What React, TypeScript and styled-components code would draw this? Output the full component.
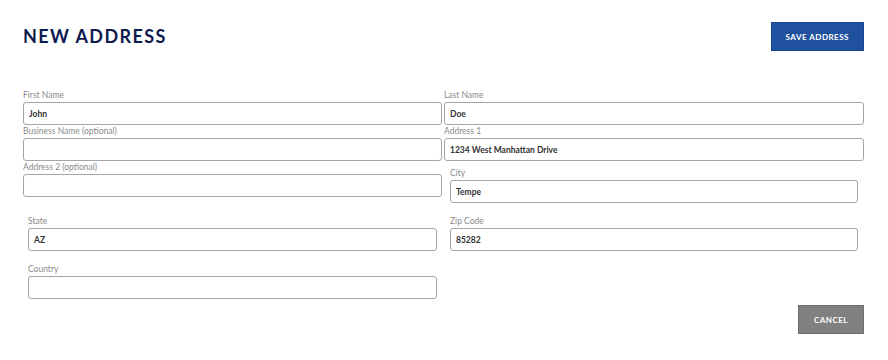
import styled, { createGlobalStyle } from 'styled-components'

const GlobalStyle = createGlobalStyle`
  html, body {
    margin: 0;
    padding: 0;
    background: #ffffff;
  }
  body {
    font-family: Lato, 'Liberation Sans', sans-serif;
  }
`

const Page = styled.div`
  padding: 22px 24px 0 23px;
`

const Header = styled.header`
  display: flex;
  justify-content: space-between;
  align-items: flex-start;
  margin-bottom: 38px;
`

const Title = styled.h1`
  margin: 3px 0 0;
  font-family: Lato, 'Liberation Sans', sans-serif;
  font-size: 18px;
  line-height: 22px;
  font-weight: 700;
  letter-spacing: 1.4px;
  color: #0d1a4e;
`

const ActionButton = styled.button<{ $variant: 'primary' | 'muted' }>`
  height: 29px;
  padding: 0 ${({ $variant }) => ($variant === 'primary' ? '14px' : '15px')};
  border: 1px solid
    ${({ $variant }) => ($variant === 'primary' ? '#1a4690' : '#6e6e6e')};
  background: ${({ $variant }) => ($variant === 'primary' ? '#1f519e' : '#808080')};
  color: #ffffff;
  font-family: Lato, 'Liberation Sans', sans-serif;
  font-size: 8px;
  font-weight: 700;
  letter-spacing: 0.5px;
  text-transform: uppercase;
  cursor: pointer;
`

const Grid = styled.div<{ $offset?: number }>`
  display: grid;
  grid-template-columns: 419px 420px;
  column-gap: 2px;
  padding-top: ${({ $offset }) => $offset ?? 0}px;
`

const Field = styled.label<{ $inset?: string }>`
  display: flex;
  flex-direction: column;
  padding: ${({ $inset }) => $inset ?? '0'};
`

const Label = styled.span`
  display: block;
  height: 13px;
  line-height: 12px;
  font-size: 8.5px;
  color: #8a8a8a;
`

const Input = styled.input`
  box-sizing: border-box;
  width: 100%;
  height: 23px;
  margin: 0;
  padding: 0 5px;
  border: 1px solid #a5a5a5;
  border-radius: 3px;
  background: #ffffff;
  font-family: Lato, 'Liberation Sans', sans-serif;
  font-size: 8.5px;
  font-weight: 700;
  color: #333333;
  outline: none;
`

const Footer = styled.div`
  display: flex;
  justify-content: flex-end;
`

type FieldProps = {
  label: string
  value?: string
  inset?: string
}

function TextField({ label, value = '', inset }: FieldProps) {
  return (
    <Field $inset={inset}>
      <Label>{label}</Label>
      <Input defaultValue={value} />
    </Field>
  )
}

export default function App() {
  return (
    <>
      <GlobalStyle />
      <Page>
        <Header>
          <Title>NEW ADDRESS</Title>
          <ActionButton $variant="primary" type="button">
            Save Address
          </ActionButton>
        </Header>
        <Grid>
          <TextField label="First Name" value="John" />
          <TextField label="Last Name" value="Doe" />
          <TextField label="Business Name (optional)" />
          <TextField label="Address 1" value="1234 West Manhattan Drive" />
          <TextField label="Address 2 (optional)" />
          <TextField label="City" value="Tempe" inset="6px 6px 0" />
        </Grid>
        <Grid $offset={6}>
          <TextField label="State" value="AZ" inset="6px 5px" />
          <TextField label="Zip Code" value="85282" inset="6px 6px" />
          <TextField label="Country" inset="6px 5px" />
        </Grid>
        <Footer>
          <ActionButton $variant="muted" type="button">
            Cancel
          </ActionButton>
        </Footer>
      </Page>
    </>
  )
}
